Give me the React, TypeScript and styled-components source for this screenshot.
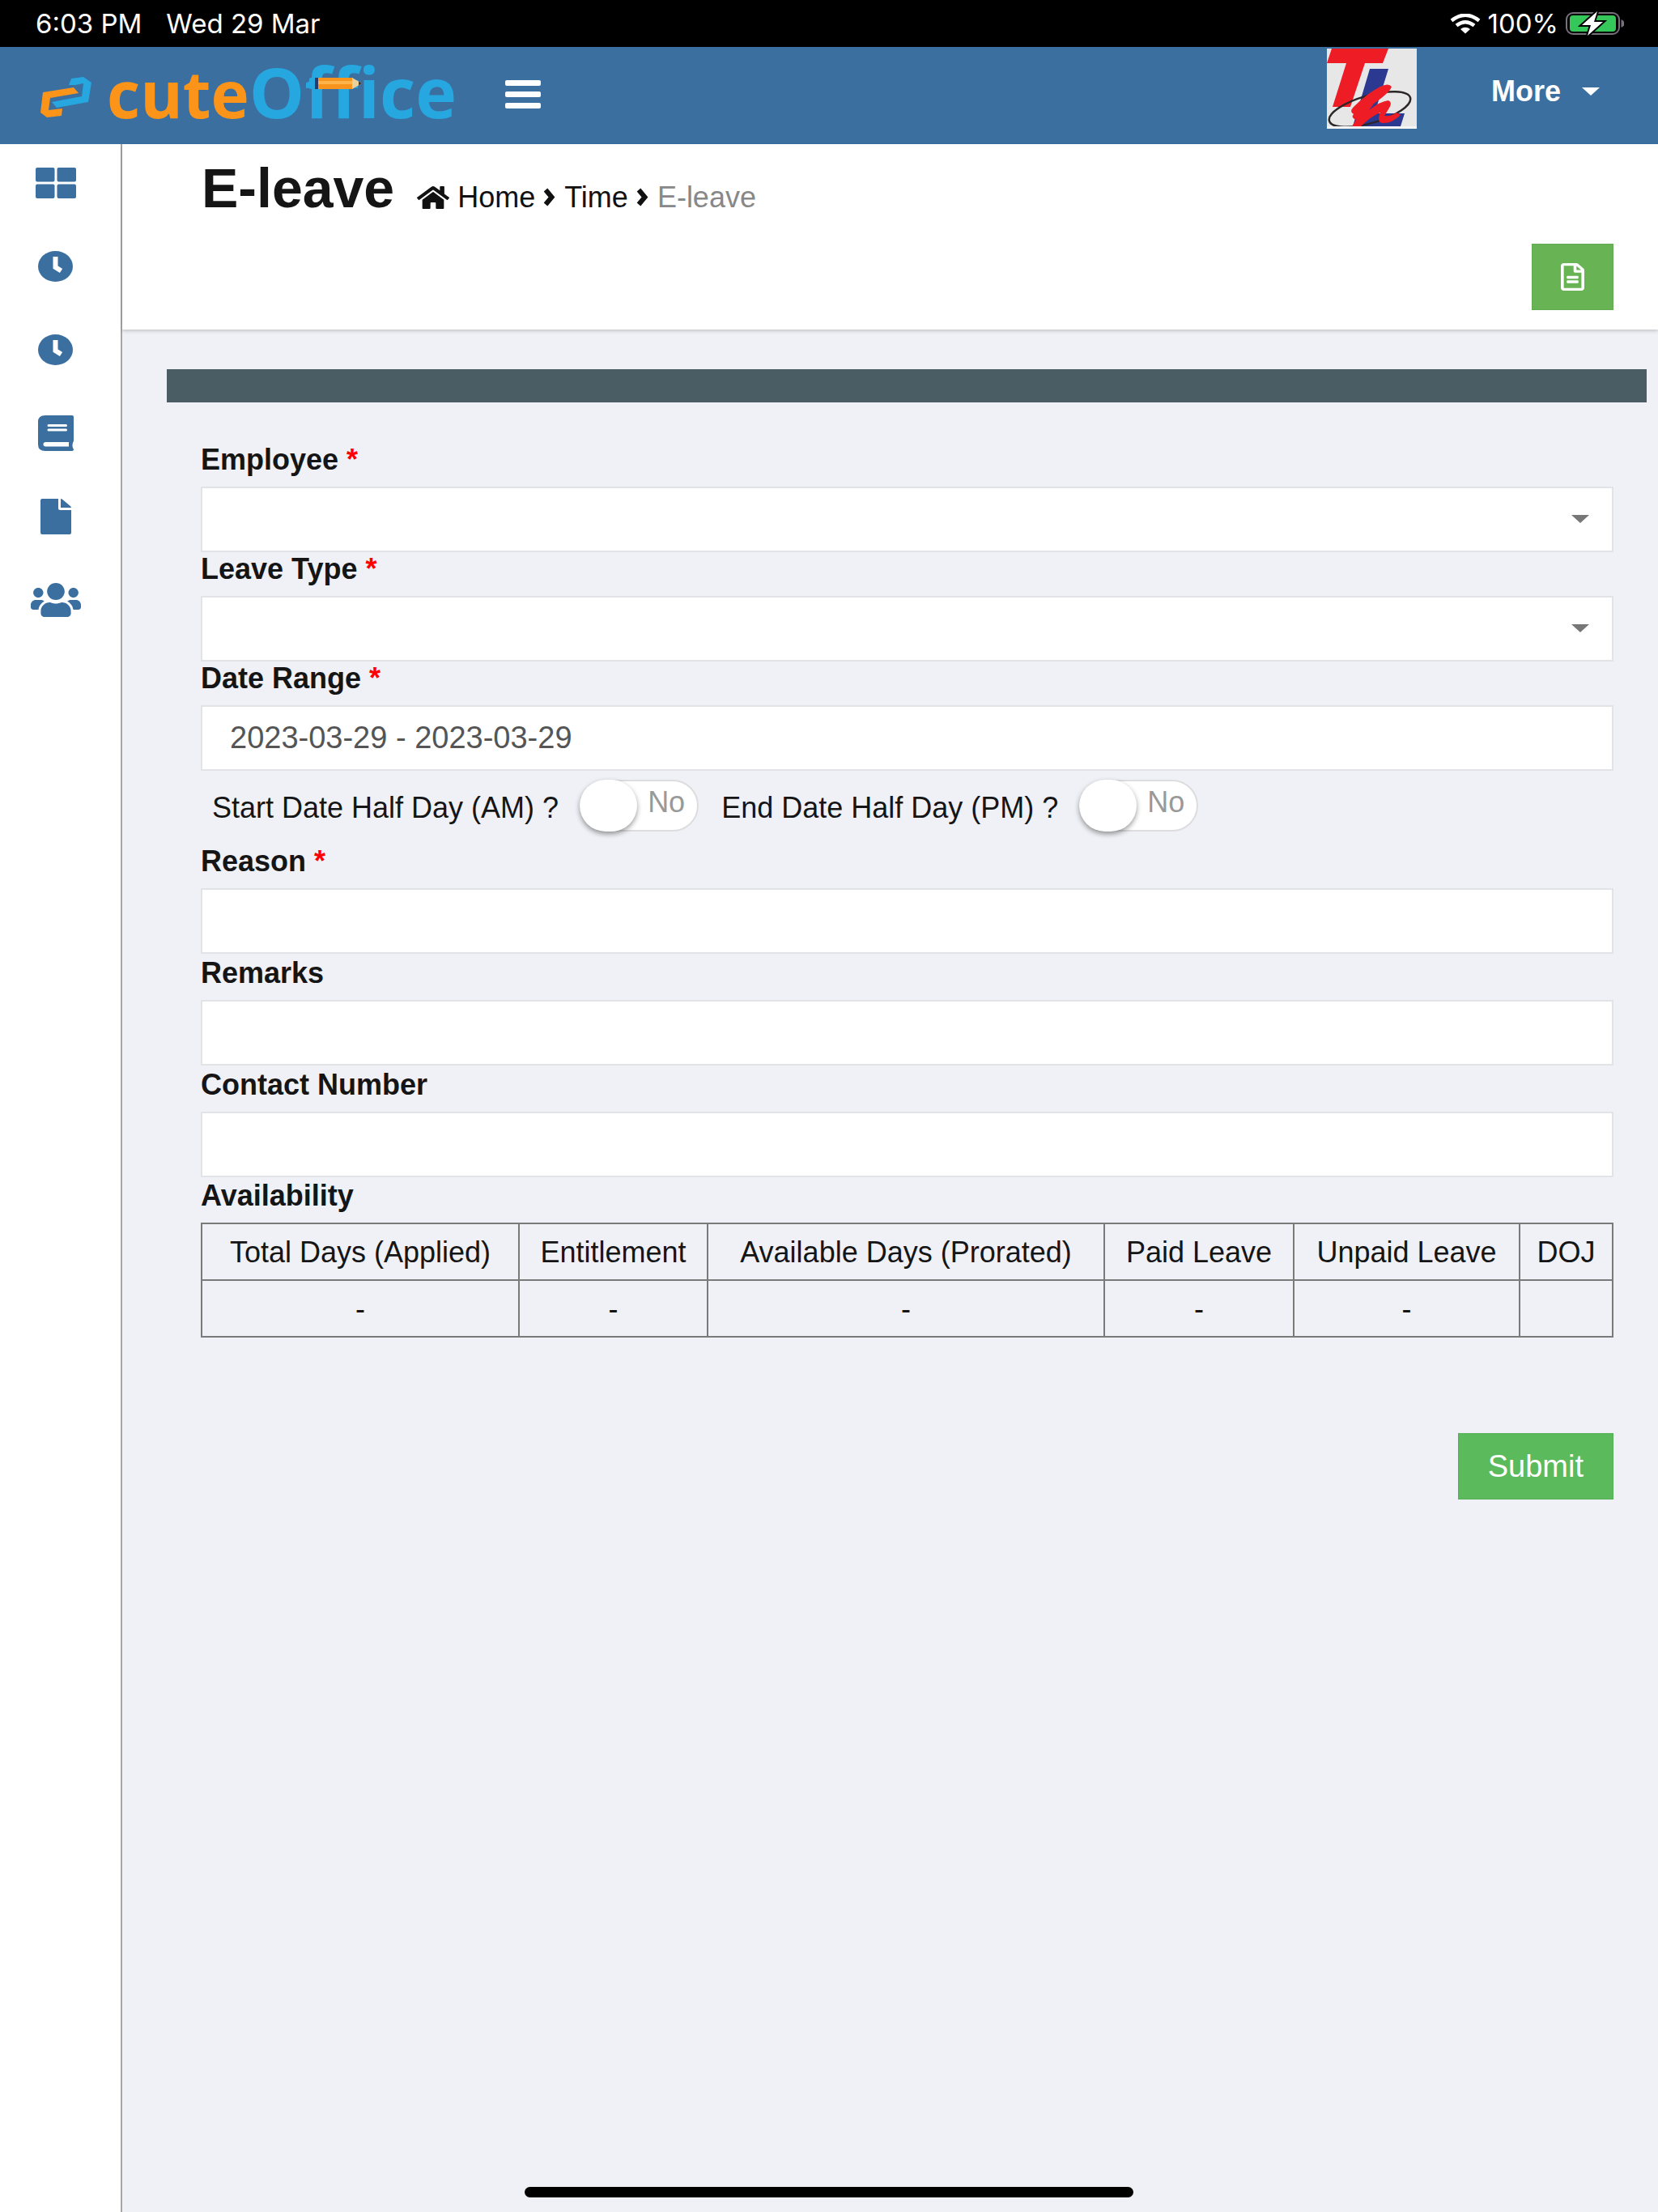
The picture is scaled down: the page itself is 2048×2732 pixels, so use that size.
import React from "react";
import styled, { createGlobalStyle } from "styled-components";
import { FaHome, FaRegFileAlt, FaUsers } from "react-icons/fa";

const blue = "#3b6fa0";
const sans = `"Liberation Sans", Arial, sans-serif`;

const GlobalStyle = createGlobalStyle`
  *, *::before, *::after { box-sizing: border-box; }
  html, body, #root { height: 100%; }
  body { margin: 0; background: #f0f1f6; color: #151515; font-family: ${sans}; font-size: 36px; line-height: 40px; }
  input, select, button { font-family: inherit; border-radius: 0; }
  a { color: inherit; text-decoration: none; }
`;

const Page = styled.div`
  min-height: 100%;
  display: flex;
  flex-direction: column;
`;

const StatusBar = styled.div`
  height: 58px;
  padding: 0 42px 0 44px;
  display: flex;
  align-items: center;
  background: #000;
  color: #fff;
  font-family: Inter, ${sans};
  font-size: 33px;
  line-height: 36px;
`;
const StatusText = styled.span`
  margin-right: 30px;
`;
const StatusRight = styled.div`
  margin-left: auto;
  display: flex;
  align-items: center;
  gap: 9px;
`;

const TopBar = styled.header`
  height: 120px;
  padding: 0 72px 4px 48px;
  display: flex;
  align-items: center;
  background: ${blue};
`;
const Brand = styled.a`
  display: flex;
  align-items: center;
  gap: 18px;
  font-family: "Open Sans", sans-serif;
  font-weight: 700;
  line-height: 112px;
  font-variant-ligatures: none;
`;
const BrandCute = styled.span`
  font-size: 80px;
  color: #fb9419;
`;
const BrandOffice = styled.span`
  position: relative;
  font-size: 86px;
  color: #26a7df;
`;
const BrandWord = styled.span`
  display: flex;
  align-items: baseline;
  padding-bottom: 4px;
`;
const Pencil = styled.svg`
  position: absolute;
  left: 74px;
  top: 39px;
`;
const MenuButton = styled.button`
  margin-left: 60px;
  padding: 0;
  border: 0;
  background: none;
  display: flex;
  flex-direction: column;
  gap: 7px;
`;
const MenuLine = styled.span`
  width: 44px;
  height: 7px;
  border-radius: 2px;
  background: #fff;
`;
const Company = styled.svg`
  align-self: flex-start;
  margin: 2px 92px 0 auto;
`;
const MoreButton = styled.button`
  padding: 0 0 6px;
  border: 0;
  background: none;
  color: #fff;
  display: flex;
  align-items: center;
  gap: 26px;
  font-size: 36px;
  line-height: 40px;
  font-weight: 700;
`;

const Body = styled.div`
  flex: 1;
  display: flex;
`;
const Sidebar = styled.nav`
  width: 151px;
  flex: none;
  background: #fff;
  border-right: 2px solid #a6a6a6;
`;
const SideLink = styled.a`
  width: 137px;
  height: 103px;
  padding-bottom: 8px;
  display: flex;
  align-items: center;
  justify-content: center;
  color: ${blue};
  svg { display: block; flex: none; }
`;

const Main = styled.main`
  flex: 1;
  min-width: 0;
`;
const PageHead = styled.section`
  height: 229px;
  padding: 16px 55px 24px 98px;
  display: flex;
  flex-direction: column;
  justify-content: space-between;
  background: #fff;
  box-shadow: 0 2px 4px rgba(0, 0, 0, 0.18);
`;
const TitleRow = styled.div`
  display: flex;
  align-items: baseline;
`;
const Title = styled.h1`
  margin: 0 28px 0 0;
  font-size: 68px;
  line-height: 76px;
`;
const Crumbs = styled.div`
  display: flex;
  align-items: baseline;
  gap: 10px;
  color: #111;
`;
const Current = styled.span`
  color: #888;
`;
const DocButton = styled.button`
  align-self: flex-end;
  width: 101px;
  height: 82px;
  padding: 0;
  border: 1px solid #62ab52;
  background: #68b354;
  color: #fff;
  display: grid;
  place-items: center;
`;

const Strip = styled.div`
  margin: 49px 14px 0 55px;
  height: 41px;
  background: #4a5c64;
`;
const Form = styled.form`
  padding: 50px 55px 0 97px;
`;
const Field = styled.div<{ $loose?: boolean }>`
  padding-top: ${(p) => (p.$loose ? 3 : 0)}px;
  display: flex;
  flex-direction: column;
`;
const FieldLabel = styled.label`
  font-weight: 700;
  line-height: 42px;
  padding-bottom: 12px;
`;
const Star = styled.span`
  color: #f00;
`;
const TextInput = styled.input`
  height: 81px;
  padding: 0 34px;
  border: 2px solid #e2e3e6;
  background: #fff;
  color: #555;
  font-size: 38px;
  outline: none;
`;
const SelectWrap = styled.div`
  position: relative;
  display: grid;
`;
const Select = styled.select`
  height: 81px;
  padding: 0 34px;
  border: 2px solid #e2e3e6;
  background: #fff;
  color: #555;
  font-size: 38px;
  appearance: none;
  outline: none;
`;
const SelectCaret = styled.svg`
  position: absolute;
  right: 30px;
  top: 35px;
  pointer-events: none;
`;

const SwitchRow = styled.div`
  height: 91px;
  padding: 11px 0 0 14px;
  display: flex;
  align-items: flex-start;
  gap: 28px;
`;
const SwitchLabel = styled.label`
  display: flex;
  align-items: flex-start;
  gap: 26px;
`;
const SwitchText = styled.span`
  padding-top: 15px;
`;
const Track = styled.span`
  position: relative;
  width: 147px;
  height: 64px;
  border: 2px solid #dddddf;
  border-radius: 32px;
  background: #fff;
  color: #999;
  padding: 6px 0 0 82px;
`;
const SwitchInput = styled.input`
  appearance: none;
  position: absolute;
  inset: -2px auto auto -2px;
  width: 71px;
  height: 64px;
  margin: 0;
  border-radius: 32px;
  background: #fff;
  box-shadow: 0 3px 6px rgba(0, 0, 0, 0.4);
`;

const Table = styled.table`
  width: 100%;
  table-layout: fixed;
  border-collapse: collapse;
  text-align: center;
`;
const Caption = styled.caption`
  text-align: left;
  font-weight: 700;
  line-height: 42px;
  padding: 2px 0 12px;
`;
const Cell = styled.td`
  height: 70px;
  padding: 2px 0 0;
  border: 2px solid #7a7a7a;
  white-space: nowrap;
`;
const HeadCell = styled(Cell)`
  font-weight: 400;
`;
const Actions = styled.div`
  padding-top: 118px;
  display: flex;
  justify-content: flex-end;
`;
const Submit = styled.button`
  height: 82px;
  padding: 0 36px;
  border: 1px solid #55b057;
  background: #5bba5c;
  color: #fff;
  font-size: 38px;
`;
const HomeIndicator = styled.div`
  position: fixed;
  bottom: 18px;
  left: 50%;
  width: 752px;
  height: 13px;
  margin-left: -376px;
  border-radius: 7px;
  background: #000;
`;

const Clock = () => (
  <svg width="43" height="38" viewBox="0 0 43 38">
    <ellipse cx="21.5" cy="19" rx="21.5" ry="19" fill="currentColor" />
    <path d="M21.5 7v13l7 4.500" fill="none" stroke="#fff" strokeWidth="6" />
  </svg>
);

const Grid = () => (
  <svg width="50" height="38" viewBox="0 0 50 38" fill="currentColor">
    <rect width="23.500" height="17.500" rx="2" />
    <rect x="26.500" width="23.500" height="17.500" rx="2" />
    <rect y="20.500" width="23.500" height="17.500" rx="2" />
    <rect x="26.500" y="20.500" width="23.500" height="17.500" rx="2" />
  </svg>
);

const Book = () => (
  <svg width="44" height="44" viewBox="0 0 44 44">
    <path
      d="M9 0H42q2 0 2 2V31q0 1.500-1 2.500-1.200 3.500 0 7 1 .5 1 1.500 0 2-2 2H9Q0 44 0 36V8Q0 0 9 0Z"
      fill="currentColor"
    />
    <path d="M13 12.500H34.500M13 18H34.500" stroke="#fff" strokeWidth="3" strokeLinecap="round" />
    <path d="M9.500 33H38v5.500H9.500q-3 0-3-2.700T9.500 33Z" fill="#fff" />
  </svg>
);

const File = () => (
  <svg width="38" height="44" viewBox="0 0 38 44" fill="currentColor">
    <path d="M2 0H22V11.500q0 2.500 2.500 2.500H38V42q0 2-2 2H2q-2 0-2-2V2Q0 0 2 0Z" />
    <path d="M25 0q1 0 2 .8L36.800 9Q38 10 38 11H25Z" />
  </svg>
);

const People = () => (
  <FaUsers size={62} preserveAspectRatio="none" style={{ height: 48 }} />
);

const Chevron = () => (
  <svg width="16" height="24" viewBox="0 0 16 24">
    <path d="M3 2.500L10.500 11.500 3 20.500" fill="none" stroke="#111" strokeWidth="6" />
  </svg>
);

const BrandMark = () => (
  <svg width="66" height="58" viewBox="-2 -8 66 58">
    <path d="M35 10L38 2 53 0 63 7 59 31 20 38 14 31 51 24 53 8 43 10Z" fill="#26a7df" />
    <path d="M3 19L41 13 47 20 12 26 10 41 27 39 26 48 8 50 0 44Z" fill="#fb9419" />
  </svg>
);

const side = [
  { name: "Dashboard", icon: <Grid /> },
  { name: "Time", icon: <Clock /> },
  { name: "Attendance", icon: <Clock /> },
  { name: "Records", icon: <Book /> },
  { name: "Documents", icon: <File /> },
  { name: "Employees", icon: <People /> },
];

const columns = [
  { title: "Total Days (Applied)", width: 392, value: "-" },
  { title: "Entitlement", width: 233, value: "-" },
  { title: "Available Days (Prorated)", width: 490, value: "-" },
  { title: "Paid Leave", width: 234, value: "-" },
  { title: "Unpaid Leave", width: 279, value: "-" },
  { title: "DOJ", width: 115, value: "" },
];
const totalWidth = columns.reduce((sum, c) => sum + c.width, 0);

function SelectField({ id, label }: { id: string; label: string }) {
  return (
    <Field>
      <FieldLabel htmlFor={id}>
        {label} <Star>*</Star>
      </FieldLabel>
      <SelectWrap>
        <Select id={id} defaultValue="">
          <option value=""></option>
        </Select>
        <SelectCaret width="22" height="10" viewBox="0 0 22 10">
          <path d="M0 0H22L11 10Z" fill="#777" />
        </SelectCaret>
      </SelectWrap>
    </Field>
  );
}

function TextField({ id, label, value, required, loose }: { id: string; label: string; value?: string; required?: boolean; loose?: boolean }) {
  return (
    <Field $loose={loose}>
      <FieldLabel htmlFor={id}>
        {label} {required && <Star>*</Star>}
      </FieldLabel>
      <TextInput id={id} type="text" defaultValue={value} />
    </Field>
  );
}

function Switch({ label }: { label: string }) {
  return (
    <SwitchLabel>
      <SwitchText>{label}</SwitchText>
      <Track>
        <SwitchInput type="checkbox" />
        No
      </Track>
    </SwitchLabel>
  );
}

export default function App() {
  return (
    <Page>
      <GlobalStyle />
      <StatusBar>
        <StatusText>6:03 PM</StatusText>
        <StatusText>Wed 29 Mar</StatusText>
        <StatusRight>
          <svg width="38" height="25" viewBox="0 0 38 25">
            <path d="M2 8.500Q19-5 36 8.500M8 14.500Q19 6 30 14.500" fill="none" stroke="#fff" strokeWidth="4.500" />
            <path d="M13 19q6-4.500 12 0l-6 5.500Z" fill="#fff" />
          </svg>
          <span>100%</span>
          <svg width="72" height="30" viewBox="0 0 72 30">
            <rect x="1" y="2" width="65" height="26" rx="8" fill="none" stroke="#76717a" strokeWidth="2" />
            <rect x="5" y="5" width="57" height="20" rx="4" fill="#35c759" />
            <path d="M68.500 10q4 1.500 4 5t-4 5Z" fill="#76717a" />
            <path d="M39 0L20 17h11l-4 13 19-17H35Z" fill="#fff" stroke="#000" strokeWidth="4" paintOrder="stroke" />
          </svg>
        </StatusRight>
      </StatusBar>

      <TopBar>
        <Brand href="#" aria-label="cuteOffice">
          <BrandMark />
          <BrandWord>
            <BrandCute>cute</BrandCute>
            <BrandOffice>
              Office
              <Pencil width="65" height="14" viewBox="0 0 65 14">
                <rect width="9" height="14" rx="2" fill="#26a7df" />
                <rect x="7" width="4" height="14" fill="#2b3a67" />
                <rect x="11" width="43" height="14" fill="#f7941d" />
                <rect x="11" y="4" width="43" height="4" fill="#fdb24a" />
                <path d="M53 0L65 7 53 14Z" fill="#ecd09a" />
                <path d="M61 4.700L65 7l-4 2.300Z" fill="#333" />
              </Pencil>
            </BrandOffice>
          </BrandWord>
        </Brand>
        <MenuButton type="button" aria-label="Toggle menu">
          <MenuLine />
          <MenuLine />
          <MenuLine />
        </MenuButton>
        <Company width="111" height="99" viewBox="0 0 111 99">
          <rect width="111" height="99" fill="#e7e7e8" />
          <path d="M6 0H76L69 18H47L29 72H7L24 18H0Z" fill="#ee1c25" />
          <path d="M53 25H76L59 80H96L91 96H32Z" fill="#2b3990" />
          <ellipse cx="53" cy="75" rx="52" ry="17" transform="rotate(-16 53 75)" fill="none" stroke="#2b2729" strokeWidth="2.500" />
          <path
            d="M66 47Q76 42 80 47 78 54 58 68L52 76Q66 65 76 64 82 67 76 75L71 83Q80 84 86 79L91 82Q80 93 68 92 61 90 66 79 54 84 42 96H31L36 88Q29 85 33 81 27 78 33 72Q50 55 66 47Z"
            fill="#ee1c25"
          />
          <rect y="96" width="111" height="3" fill="#f4f4f4" />
        </Company>
        <MoreButton type="button">
          More
          <svg width="22" height="10" viewBox="0 0 22 10">
            <path d="M0 0H22L11 10Z" fill="#fff" />
          </svg>
        </MoreButton>
      </TopBar>

      <Body>
        <Sidebar aria-label="Main">
          {side.map((s) => (
            <SideLink key={s.name} href="#" aria-label={s.name}>
              {s.icon}
            </SideLink>
          ))}
        </Sidebar>
        <Main>
          <PageHead>
            <TitleRow>
              <Title>E-leave</Title>
              <Crumbs>
                <FaHome size={40} preserveAspectRatio="none" style={{ height: 32, alignSelf: "center" }} />
                <a href="#">Home</a>
                <Chevron />
                <a href="#">Time</a>
                <Chevron />
                <Current>E-leave</Current>
              </Crumbs>
            </TitleRow>
            <DocButton type="button" aria-label="Leave records">
              <FaRegFileAlt size={34} preserveAspectRatio="none" style={{ width: 29 }} />
            </DocButton>
          </PageHead>
          <Strip />
          <Form onSubmit={(e) => e.preventDefault()}>
            <SelectField id="employee" label="Employee" />
            <SelectField id="leave-type" label="Leave Type" />
            <TextField id="date-range" label="Date Range" value="2023-03-29 - 2023-03-29" required />
            <SwitchRow>
              <Switch label="Start Date Half Day (AM) ?" />
              <Switch label="End Date Half Day (PM) ?" />
            </SwitchRow>
            <TextField id="reason" label="Reason" required />
            <TextField id="remarks" label="Remarks" loose />
            <TextField id="contact" label="Contact Number" loose />
            <Table>
              <Caption>Availability</Caption>
              <colgroup>
                {columns.map((c) => (
                  <col key={c.title} style={{ width: `${(c.width / totalWidth) * 100}%` }} />
                ))}
              </colgroup>
              <thead>
                <tr>
                  {columns.map((c) => (
                    <HeadCell as="th" key={c.title}>
                      {c.title}
                    </HeadCell>
                  ))}
                </tr>
              </thead>
              <tbody>
                <tr>
                  {columns.map((c) => (
                    <Cell key={c.title}>{c.value}</Cell>
                  ))}
                </tr>
              </tbody>
            </Table>
            <Actions>
              <Submit type="submit">Submit</Submit>
            </Actions>
          </Form>
        </Main>
      </Body>
      <HomeIndicator />
    </Page>
  );
}
